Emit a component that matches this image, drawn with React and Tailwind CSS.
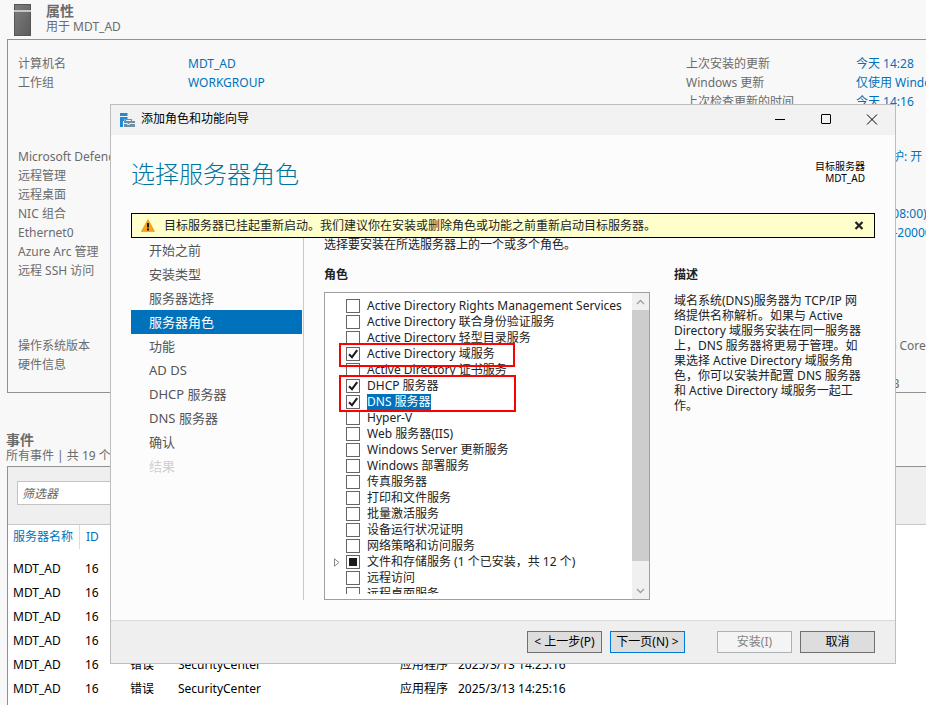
import React from "react";

const propertyGroups = [
  [
    ["计算机名", "MDT_AD", "上次安装的更新", "今天 14:28"],
    ["工作组", "WORKGROUP", "Windows 更新", "仅使用 Windows"],
    ["", "", "上次检查更新的时间", "今天 14:16"],
  ],
  [
    ["Microsoft Defender", "", "", "实时保护: 开"],
    ["远程管理", "", "", ""],
    ["远程桌面", "", "", ""],
    ["NIC 组合", "", "", "(UTC +08:00)"],
    ["Ethernet0", "", "", "00454 -20000"],
    ["Azure Arc 管理", "", "", ""],
    ["远程 SSH 访问", "", "", ""],
  ],
  [
    ["操作系统版本", "", "", "Intel(R) Core"],
    ["硬件信息", "", "", ""],
    ["", "", "", "59.3 GB"],
  ],
];

const groupMargin = ["", "mt-9", "mt-14 -mb-px"];

const steps = [
  "开始之前",
  "安装类型",
  "服务器选择",
  "服务器角色",
  "功能",
  "AD DS",
  "DHCP 服务器",
  "DNS 服务器",
  "确认",
  "结果",
];

const roles = [
  { name: "Active Directory Rights Management Services" },
  { name: "Active Directory 联合身份验证服务" },
  { name: "Active Directory 轻型目录服务" },
  { name: "Active Directory 域服务", checked: true },
  { name: "Active Directory 证书服务" },
  { name: "DHCP 服务器", checked: true },
  { name: "DNS 服务器", checked: true, selected: true },
  { name: "Hyper-V" },
  { name: "Web 服务器(IIS)" },
  { name: "Windows Server 更新服务" },
  { name: "Windows 部署服务" },
  { name: "传真服务器" },
  { name: "打印和文件服务" },
  { name: "批量激活服务" },
  { name: "设备运行状况证明" },
  { name: "网络策略和访问服务" },
  { name: "文件和存储服务 (1 个已安装，共 12 个)", partial: true },
  { name: "远程访问" },
  { name: "远程桌面服务" },
];

const event = ["MDT_AD", "16", "错误", "SecurityCenter", "应用程序", "2025/3/13 14:25:16"];
const shortEvent = ["MDT_AD", "16", "", "", "", ""];
const events = [shortEvent, shortEvent, shortEvent, shortEvent, event, event];

const description = [
  "域名系统(DNS)服务器为 TCP/IP 网",
  "络提供名称解析。如果与 Active",
  "Directory 域服务安装在同一服务器",
  "上，DNS 服务器将更易于管理。如",
  "果选择 Active Directory 域服务角",
  "色，你可以安装并配置 DNS 服务器",
  "和 Active Directory 域服务一起工",
  "作。",
];

function Properties() {
  return (
    <section>
      <header className="flex items-start gap-[15px] pt-[3px] pb-[3px] pl-[14px]">
        <svg className="mt-px h-8 w-[17px]" viewBox="0 0 17 32" aria-hidden="true">
          <defs>
            <linearGradient id="tower" x1="0" y1="0" x2="1" y2="1">
              <stop offset="0" stopColor="#7d7d7d" />
              <stop offset="1" stopColor="#5c5c5c" />
            </linearGradient>
          </defs>
          <rect width="17" height="32" fill="#555" />
          <rect x="1" y="1" width="15" height="30" fill="url(#tower)" />
          <rect y="6" width="17" height="2" fill="#c4c4c4" />
        </svg>
        <div className="leading-4">
          <h1 className="text-sm leading-4 font-bold">属性</h1>
          <p>用于 MDT_AD</p>
        </div>
      </header>
      <div className="ml-[7px] border-t border-b border-l border-[#919191] pt-[14px] pl-[10px] leading-[19px]">
        {propertyGroups.map((group, g) => (
          <dl key={g} className={groupMargin[g]}>
            {group.map(([a, b, c, d], i) => (
              <div key={i} className="grid h-[19px] grid-cols-[170px_498px_170px_auto]">
                <dt>{a}</dt>
                <dd className="text-[#0072bc]">{b}</dd>
                <dt>{c}</dt>
                <dd className={g === 2 ? "" : "text-[#0072bc]"}>{d}</dd>
              </div>
            ))}
          </dl>
        ))}
      </div>
    </section>
  );
}

function Events() {
  return (
    <section className="flex grow flex-col pt-[39px]">
      <header className="pb-[2px] pl-[6px] leading-4">
        <h2 className="text-sm leading-4 font-bold">事件</h2>
        <p>所有事件 | 共 19 个</p>
      </header>
      <div className="ml-[7px] grow border-t border-l border-[#919191] bg-white">
        <div className="border-b border-[#c8c8c8] bg-[#efefef] pt-[14px] pb-[19px] pl-[9px]">
          <input
            aria-label="筛选器"
            placeholder="筛选器"
            className="block h-6 w-[240px] border border-[#c3c3c3] bg-white px-1 italic placeholder:text-[#666]"
          />
        </div>
        <table className="w-full table-fixed text-left text-black">
          <colgroup>
            <col className="w-[72px]" />
            <col className="w-[45px]" />
            <col className="w-[48px]" />
            <col className="w-[222px]" />
            <col className="w-[58px]" />
            <col />
          </colgroup>
          <thead>
            <tr className="h-8 align-top leading-6 text-[#0072bc]">
              <th className="p-0 font-normal">
                <div className="h-6 border-r border-[#dcdcdc] pl-[5px]">服务器名称</div>
              </th>
              <th className="p-0 pl-[6px] font-normal" colSpan={5}>
                ID
              </th>
            </tr>
          </thead>
          <tbody>
            {events.map((cells, r) => (
              <tr key={r} className="h-6">
                {cells.map((c, i) => (
                  <td key={i} className="p-0 pl-[5px]">
                    {c}
                  </td>
                ))}
              </tr>
            ))}
          </tbody>
        </table>
      </div>
    </section>
  );
}

function TitleBar() {
  return (
    <header className="flex h-[30px] items-center bg-[#f2f2f2] pl-[9px] text-black">
      <svg className="h-4 w-4" viewBox="0 0 16 16" aria-hidden="true">
        <path d="M0 1h7.5v3H0zM0 5h7.5v2H4.5v2H3v6H0z" fill="#1f8ad6" />
        <path d="M5.5 9V7.5h6V9" fill="none" stroke="#6f8fa5" strokeWidth="1.2" />
        <path d="M4 9h11v6H4z" fill="#6f8fa5" />
        <path d="M4 11.5h3.5M9.5 11.5H15M7.5 11.5v1h2v-1" fill="none" stroke="#fff" strokeWidth="0.8" />
      </svg>
      <h2 className="ml-[5px] grow pb-[2px] text-xs">添加角色和功能向导</h2>
      <div className="flex">
        <button aria-label="最小化" className="flex h-[30px] w-[46px] items-center justify-center">
          <svg width="12" height="12" viewBox="0 0 12 12" stroke="#000" fill="none">
            <path d="M1 5.5h10" />
          </svg>
        </button>
        <button aria-label="最大化" className="flex h-[30px] w-[46px] items-center justify-center">
          <svg width="12" height="12" viewBox="0 0 12 12" stroke="#000" fill="none">
            <rect x="1.5" y="0.5" width="9" height="9" rx="0.5" />
          </svg>
        </button>
        <button aria-label="关闭" className="flex h-[30px] w-[46px] items-center justify-center">
          <svg width="12" height="12" viewBox="0 0 12 12" stroke="#000" fill="none">
            <path d="M1 0.5l10 10M11 0.5l-10 10" />
          </svg>
        </button>
      </div>
    </header>
  );
}

function RoleRow({ role }) {
  return (
    <li className="flex h-4 items-center">
      <span className="flex w-[21px] justify-center pl-[2px]">
        {role.partial && (
          <svg width="6" height="9" viewBox="0 0 6 9" fill="none" stroke="#8a8a8a" aria-hidden="true">
            <path d="M.5 .8v7.4L5 4.5z" />
          </svg>
        )}
      </span>
      <label className="flex h-4 items-center">
        <span className="grid h-[14px] w-[14px]">
          <input
            type="checkbox"
            defaultChecked={role.checked}
            className="col-start-1 row-start-1 h-[14px] w-[14px] appearance-none border border-[#666] bg-white"
          />
          {role.checked && (
            <svg className="pointer-events-none col-start-1 row-start-1" width="14" height="14" viewBox="0 0 14 14" aria-hidden="true">
              <path d="M3 7.2L6 10.2L11.2 3.2" fill="none" stroke="#1c1c1c" strokeWidth="2" />
            </svg>
          )}
          {role.partial && <span className="pointer-events-none col-start-1 row-start-1 m-[3px] bg-[#1c1c1c]" />}
        </span>
        <span className={role.selected ? "ml-[7px] h-4 bg-[#0072bc] leading-4 text-white" : "ml-[7px] leading-4"}>
          {role.name}
        </span>
      </label>
    </li>
  );
}

function RoleList() {
  return (
    <div className="relative mt-2 flex h-[308px] border border-[#a0a0a0] bg-white">
      <ul className="my-[5px] h-[296px] min-w-0 grow overflow-hidden whitespace-nowrap">
        {roles.map((r) => (
          <RoleRow key={r.name} role={r} />
        ))}
      </ul>
      <div className="flex w-[17px] shrink-0 flex-col bg-[#f0f0f0]">
        <button aria-label="向上滚动" className="flex h-[17px] items-center justify-center">
          <svg width="9" height="6" viewBox="0 0 9 6" fill="none" stroke="#a0a0a0" strokeWidth="1.4">
            <path d="M1 5l3.5-3.5L8 5" />
          </svg>
        </button>
        <div className="h-[251px] bg-[#cdcdcd]" />
        <button aria-label="向下滚动" className="mt-auto flex h-[17px] items-center justify-center">
          <svg width="9" height="6" viewBox="0 0 9 6" fill="none" stroke="#a0a0a0" strokeWidth="1.4">
            <path d="M1 1l3.5 3.5L8 1" />
          </svg>
        </button>
      </div>
      <div className="pointer-events-none absolute top-[50px] left-[14px] h-6 w-44 border-2 border-[#f00]" />
      <div className="pointer-events-none absolute top-[82px] left-[14px] h-[37px] w-[177px] border-2 border-[#f00]" />
    </div>
  );
}

function Wizard() {
  const button = "h-[22px] w-[75px] border text-center whitespace-nowrap";
  return (
    <div
      role="dialog"
      aria-label="添加角色和功能向导"
      className="absolute top-[104px] right-[30px] left-[110px] border border-[#bdbdbd] bg-[#fcfcfc] text-[#222]"
    >
      <TitleBar />
      <div className="flex h-[78px] items-start justify-between pr-[30px] pl-5">
        <h1 className="pt-[19px] text-2xl leading-10 font-light text-[#00759c]">选择服务器角色</h1>
        <p className="pt-[25px] text-right text-[10px] leading-3 text-black">
          目标服务器
          <br />
          MDT_AD
        </p>
      </div>
      <div className="mx-5 flex h-[25px] items-center border border-black bg-[#ffffcc] pr-[10px] pl-[9px]">
        <svg width="14" height="13" viewBox="0 0 14 13" aria-hidden="true">
          <path d="M7 .5L13.6 12.6H.4z" fill="#f9a11b" stroke="#f08a00" strokeWidth="0.6" strokeLinejoin="round" />
          <path d="M6 4h2v4.5H6zM6 9.6h2v1.8H6z" fill="#1c1c1c" />
        </svg>
        <p className="ml-[9px] grow">目标服务器已挂起重新启动。我们建议你在安装或删除角色或功能之前重新启动目标服务器。</p>
        <button aria-label="关闭通知">
          <svg width="10" height="10" viewBox="0 0 10 10" stroke="#222" strokeWidth="2.2" fill="none">
            <path d="M1.5 1l7 7M8.5 1l-7 7" />
          </svg>
        </button>
      </div>
      <div className="flex pr-[30px] pl-5">
        <nav className="h-[362px] w-[173px] shrink-0 border-r border-[#c8c8c8] pr-px">
          {steps.map((s) => (
            <a
              key={s}
              href="#"
              className={
                s === "服务器角色"
                  ? "block h-6 bg-[#0072bc] pl-[18px] text-[13px] leading-6 text-white"
                  : s === "结果"
                    ? "block h-6 pl-[18px] text-[13px] leading-6 text-[#cfcfcf]"
                    : "block h-6 pl-[18px] text-[13px] leading-6 text-[#555]"
              }
            >
              {s}
            </a>
          ))}
        </nav>
        <main className="ml-5 min-w-0 grow">
          <p className="leading-[14px]">选择要安装在所选服务器上的一个或多个角色。</p>
          <h3 className="mt-[14px] text-xs leading-[18px] font-bold">角色</h3>
          <RoleList />
        </main>
        <aside className="ml-6 w-[191px] shrink-0 pt-7">
          <h3 className="text-xs leading-[18px] font-bold">描述</h3>
          <p className="mt-[9px] leading-[15px] whitespace-nowrap">
            {description.map((line) => (
              <span key={line} className="block">
                {line}
              </span>
            ))}
          </p>
        </aside>
      </div>
      <footer className="mt-5 flex justify-end border-t border-[#d9d9d9] bg-[#efefef] pt-[10px] pr-5 pb-[10px] text-black">
        <button className={`${button} border-[#707070] bg-[#dddddd]`}>&lt; 上一步(P)</button>
        <button className={`${button} ml-2 border-[#0078d7] bg-[#dddddd]`}>下一页(N) &gt;</button>
        <button disabled className={`${button} ml-8 border-[#adb2b5] bg-[#f4f4f4] text-[#838383]`}>
          安装(I)
        </button>
        <button className={`${button} ml-2 border-[#707070] bg-[#dddddd]`}>取消</button>
      </footer>
    </div>
  );
}

export default function App() {
  return (
    <div className="relative flex h-screen flex-col overflow-hidden bg-[#f8f8f8] font-['Noto_Sans','Noto_Sans_CJK_SC',sans-serif] text-xs whitespace-nowrap text-[#6b6b6b]">
      <Properties />
      <Events />
      <Wizard />
    </div>
  );
}
